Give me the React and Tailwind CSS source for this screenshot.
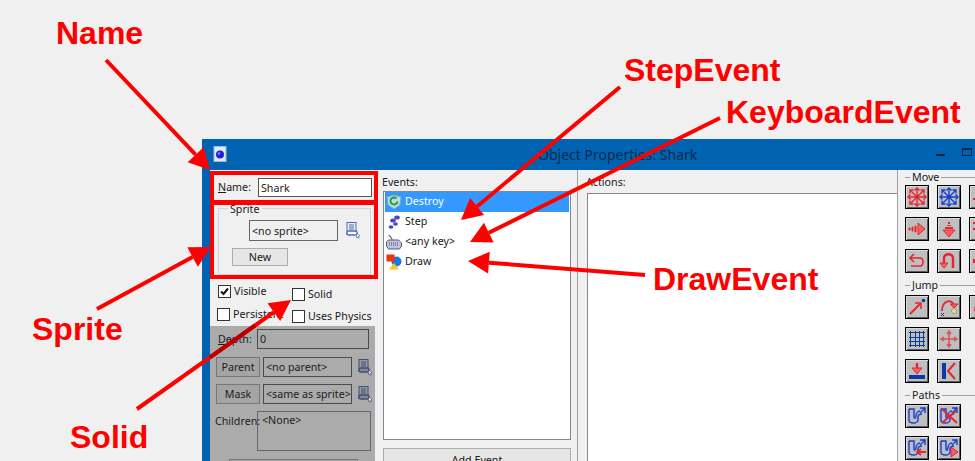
import React from 'react';

const ui = "font-['Noto_Sans',sans-serif] text-[10.7px] leading-[14px]";

// one annotation arrow, tip at (x2, y2)
function Arrow({ x1, y1, x2, y2, size = 21, wide = 11 }) {
  const len = Math.hypot(x2 - x1, y2 - y1);
  const ux = (x2 - x1) / len;
  const uy = (y2 - y1) / len;
  const bx = x2 - ux * size;
  const by = y2 - uy * size;
  const pts = [
    [x2, y2],
    [bx - uy * wide, by + ux * wide],
    [bx + uy * wide, by - ux * wide],
  ]
    .map((p) => p.join(','))
    .join(' ');
  return (
    <g>
      <line x1={x1} y1={y1} x2={bx} y2={by} stroke="#ff0000" strokeWidth="4" />
      <polygon points={pts} fill="#ff0000" />
    </g>
  );
}

function DocIcon({ dim }) {
  const c = dim ? '#3f4f78' : '#4a6fb0';
  return (
    <svg width="15" height="17" viewBox="0 0 15 17" className="shrink-0">
      <rect x="1" y="0.5" width="9" height="12" fill={dim ? '#9a9a9a' : '#e8eef8'} stroke={c} />
      <path d="M3 3h5M3 5h5M3 7h5" stroke={c} />
      <rect x="1" y="9" width="10" height="4" rx="1.5" fill={dim ? '#8a8a8a' : '#fff'} stroke={c} strokeWidth="1.4" />
      <path d="M11 11l3 3-1.5.4.6 1.6-1 .4-.7-1.6-1 .8z" fill="#fff" stroke={c} strokeWidth="0.7" />
    </svg>
  );
}

function Check({ checked }) {
  return (
    <span className="w-[13px] h-[13px] border border-[#333] bg-white shrink-0 flex items-center justify-center">
      {checked && (
        <svg width="11" height="11" viewBox="0 0 11 11">
          <path d="M2 5.5l2.5 2.5L9 2.5" fill="none" stroke="#111" strokeWidth="2" />
        </svg>
      )}
    </span>
  );
}

function Tool({ children }) {
  return (
    <div className="w-[24px] h-[24px] shrink-0 border border-black bg-[#bfbfbf] shadow-[inset_1px_1px_0_#d8d8d8,inset_-1px_-1px_0_#5a5a5a] flex items-center justify-center">
      <svg width="20" height="20" viewBox="0 0 20 20" fill="none">
        {children}
      </svg>
    </div>
  );
}

function Star({ color }) {
  return (
    <g stroke={color} strokeWidth="1.4">
      <path d="M10 1v18M1 10h18M3.5 3.5l13 13M16.5 3.5l-13 13" />
      <path d="M7.5 3.5L10 1l2.5 2.5M7.5 16.5L10 19l2.5-2.5M3.5 7.5L1 10l2.5 2.5M16.5 7.5L19 10l-2.5 2.5M3 6.5V3h3.5M17 6.5V3h-3.5M3 13.5V17h3.5M17 13.5V17h-3.5" />
    </g>
  );
}

const red = '#e8242c';
const blue = '#1040d8';
const navy = '#0a3a9a';

function PathGlyph() {
  return (
    <g>
      <path d="M2 3h5v8c0 2 2 1 2-1 0-3 2-5 4-5" stroke={blue} strokeWidth="1.4" />
      <path d="M2 3v11c0 4 9 4 9 0v-3c0-2 1-3 4-3" stroke={blue} strokeWidth="1.4" />
      <path d="M13 2h5v5M18 2l-5 5" stroke={blue} strokeWidth="1.4" />
    </g>
  );
}

function ToolRow({ children }) {
  return <div className="flex gap-[8px]">{children}</div>;
}

function GroupHead({ label }) {
  return (
    <div className="flex items-center h-[14px]">
      <div className="w-[5px] h-px bg-[#a0a0a0]" />
      <span className="px-[2px]">{label}</span>
      <div className="flex-1 h-px bg-[#a0a0a0]" />
    </div>
  );
}

function EventRow({ icon, label, selected }) {
  return (
    <div className={`h-[20px] flex items-center gap-[3px] pl-px ${selected ? 'bg-[#3399ff] text-white' : ''}`}>
      <svg width="16" height="16" viewBox="0 0 16 16" className="shrink-0">
        {icon}
      </svg>
      <span className="-mt-[2px]">{label}</span>
    </div>
  );
}

function WindowFrame() {
  return (
    <div className={`${ui} ml-[202px] w-[800px] h-[322px] border-l-[8px] border-[#0063b1] bg-[#f0f0f0] text-[#1a1a1a] overflow-hidden`}>
      {/* title bar */}
      <div className="-ml-[8px] h-[31px] bg-[#0063b1] flex items-center relative">
        <svg width="14" height="16" viewBox="0 0 14 16" className="ml-[11px] mb-[1px]">
          <rect x="1" y="0.5" width="12" height="15" fill="#dfe8f7" stroke="#9fb6dd" />
          <circle cx="7" cy="8.5" r="4" fill="#2222cc" />
          <circle cx="6" cy="7.5" r="1.2" fill="#8c8cff" />
        </svg>
        <span className="ml-[311px] text-[14px] text-[#0d2a4c]">Object Properties: Shark</span>
        <div className="ml-[239px] w-[9px] h-[2px] bg-[#10253f] mt-[1px]" />
        <div className="ml-[17px] w-[10px] h-[8px] mb-[5px] border border-[#10253f] border-t-2" />
      </div>

      <div className="flex h-[291px]">
        {/* left column */}
        <div className="w-[165px] shrink-0">
          <div className="flex items-center pl-[8px] pt-[8px] h-[27px]">
            <span className="w-[40px] -mt-[2px]"><u>N</u>ame:</span>
            <div className="w-[114px] h-[19px] border border-[#555] bg-white px-[2px] flex items-center">Shark</div>
          </div>
          <div className="relative mt-[11px] ml-[8px] w-[153px] h-[67px] border border-[#d5d5d5] pt-[11px]">
            <span className="absolute -top-[7px] left-[9px] bg-[#f0f0f0] px-[2px]">Sprite</span>
            <div className="flex items-center">
              <div className="ml-[30px] w-[89px] h-[21px] border border-[#666] flex items-center px-[2px]">&lt;no sprite&gt;</div>
              <div className="ml-[8px]"><DocIcon /></div>
            </div>
            <div className="ml-[13px] mt-[7px] w-[56px] h-[18px] border border-[#adadad] bg-[#e6e6e6] flex items-center justify-center">New</div>
          </div>
          <div className="flex pt-[9px] h-[51px]">
            <div className="pl-[7px] w-[82px] flex flex-col gap-[9px]">
              <label className="flex items-center gap-[3px] pl-[1px]"><Check checked />Visible</label>
              <label className="flex items-center gap-[3px]"><Check />Persistent</label>
            </div>
            <div className="flex flex-col gap-[8px] pt-[3px]">
              <label className="flex items-center gap-[3px]"><Check />Solid</label>
              <label className="flex items-center gap-[3px] whitespace-nowrap"><Check />Uses Physics</label>
            </div>
          </div>
          {/* disabled part */}
          <div className="bg-[#ababab] h-[135px] pt-[3px] text-[#1c1c1c]">
            <div className="flex items-center h-[20px] pl-[8px]">
              <span className="w-[39px]"><u>D</u>epth:</span>
              <div className="w-[112px] h-[20px] border border-[#4a4a4a] px-[2px] flex items-center">0</div>
            </div>
            <div className="flex items-center h-[20px] pl-[6px] mt-[8px]">
              <div className="w-[44px] h-[20px] border border-[#777] bg-[#a4a4a4] flex items-center justify-center">Parent</div>
              <div className="ml-[3px] w-[89px] h-[20px] border border-[#4a4a4a] px-[2px] flex items-center">&lt;no parent&gt;</div>
              <div className="ml-[6px]"><DocIcon dim /></div>
            </div>
            <div className="flex items-center h-[20px] pl-[6px] mt-[7px]">
              <div className="w-[44px] h-[20px] border border-[#777] bg-[#a4a4a4] flex items-center justify-center">Mask</div>
              <div className="ml-[3px] w-[89px] h-[20px] border border-[#4a4a4a] px-[2px] flex items-center whitespace-nowrap">&lt;same as sprite&gt;</div>
              <div className="ml-[6px]"><DocIcon dim /></div>
            </div>
            <div className="flex pl-[5px] mt-[7px]">
              <span className="w-[42px] pt-[3px]">Children:</span>
              <div className="w-[114px] h-[40px] border border-[#666] px-[4px] pt-px">&lt;None&gt;</div>
            </div>
            <div className="ml-[19px] mt-[8px] w-[129px] h-[20px] border border-[#777] bg-[#a4a4a4]" />
          </div>
        </div>

        {/* events column */}
        <div className="w-[203px] shrink-0 pl-[8px] pr-[6px] border-r border-[#a0a0a0]">
          <div className="h-[21px] pt-[5px] -ml-px">Events:</div>
          <div className="h-[249px] border border-[#828790] bg-white px-px">
            <EventRow
              selected
              label="Destroy"
              icon={
                <g>
                  <path d="M1 3l7-2 7 2-1 8-6 4-6-4z" fill="#b8dde8" stroke="#7ba7b8" />
                  <path d="M10.5 4.5a3.5 3.5 0 1 0 1 3" fill="none" stroke="#18a030" strokeWidth="1.8" />
                </g>
              }
            />
            <EventRow
              label="Step"
              icon={
                <g fill="#4848c0">
                  <ellipse cx="11" cy="3.5" rx="2.8" ry="2" />
                  <ellipse cx="7" cy="6.5" rx="2.8" ry="2" />
                  <ellipse cx="9.5" cy="10" rx="2.4" ry="1.8" />
                  <ellipse cx="5" cy="13" rx="2.4" ry="1.8" />
                </g>
              }
            />
            <EventRow
              label="<any key>"
              icon={
                <g>
                  <path d="M0.5 8l2-2h10l3 3v3l-2 3H2.5l-2-3z" fill="#c4c4e0" stroke="#55557a" />
                  <path d="M3 9h9M3 11h9" stroke="#444466" strokeDasharray="1 1" />
                  <path d="M6 6C6 3 4 3 3 1" fill="none" stroke="#777" strokeWidth="1.4" />
                </g>
              }
            />
            <EventRow
              label="Draw"
              icon={
                <g>
                  <circle cx="10.5" cy="7.5" r="5" fill="#1f78e0" />
                  <rect x="0.5" y="0.5" width="8" height="7" fill="#f0320a" />
                  <path d="M8 9l5 6.5H3z" fill="#f8c820" />
                </g>
              }
            />
          </div>
          <div className="mt-[8px] h-[24px] border border-[#adadad] bg-[#e6e6e6] text-center pt-[4px]">Add Event</div>
        </div>

        {/* actions column */}
        <div className="w-[320px] shrink-0 pl-[9px] border-r border-[#a0a0a0]">
          <div className="h-[23px] pt-[5px] -ml-px">Actions:</div>
          <div className="h-[280px] w-[310px] bg-white border-l border-t border-[#828790]" />
        </div>

        {/* action palette */}
        <div className="w-[90px] shrink-0 pl-[7px] flex flex-col">
          <GroupHead label="Move" />
          <div className="flex flex-col gap-[8px] mt-[1px]">
            <ToolRow>
              <Tool><Star color={red} /></Tool>
              <Tool><Star color={blue} /></Tool>
              <Tool><path d="M2 12h8" stroke={red} strokeWidth="2" /></Tool>
            </ToolRow>
            <ToolRow>
              <Tool>
                <path d="M2 9h1v2H2zM5 8h1v4H5zM8 7h1v6H8z" fill={red} stroke={red} />
                <path d="M11 4l7 6-7 6z" fill="#f06068" stroke={red} />
              </Tool>
              <Tool>
                <path d="M9 3h2v2H9zM8 6h4v1H8zM6 8h8v2H6z" fill={red} />
                <path d="M4 11h12l-6 7z" fill="#f06068" stroke={red} />
              </Tool>
              <Tool><path d="M2 4h8M2 10h8" stroke={red} strokeWidth="2" /></Tool>
            </ToolRow>
            <ToolRow>
              <Tool>
                <path d="M7 3L3 7l4 4M3 7h10c4 0 4 8 0 8H4" stroke={red} strokeWidth="1.6" />
              </Tool>
              <Tool>
                <path d="M5 15V7c0-5 9-5 9 0v10" stroke={red} strokeWidth="2.4" />
                <path d="M1 12l4 5 4-5z" fill="#f06068" stroke={red} />
              </Tool>
              <Tool><path d="M2 10h8" stroke={red} strokeWidth="4" /></Tool>
            </ToolRow>
          </div>
          <div className="mt-[5px]"><GroupHead label="Jump" /></div>
          <div className="flex flex-col gap-[8px] mt-[3px]">
            <ToolRow>
              <Tool>
                <path d="M3 17L13 7" stroke={red} strokeWidth="2" />
                <path d="M8 6h6v6" stroke={red} strokeWidth="1.5" />
                <circle cx="16.5" cy="3.5" r="1.8" fill={navy} />
              </Tool>
              <Tool>
                <path d="M3 14C3 4 12 1 15 8" stroke={red} strokeWidth="1.8" />
                <path d="M11 7h8l-4 4z" fill="#f06068" stroke={red} />
                <circle cx="15" cy="14" r="2.5" fill="#f0e070" stroke="#999" />
                <path d="M2 16l3 3M5 16l-3 3" stroke={navy} />
              </Tool>
              <Tool><path d="M4 14C4 8 8 4 10 4" stroke={red} strokeWidth="2" /></Tool>
            </ToolRow>
            <ToolRow>
              <Tool>
                <path d="M3.5 2v16M8.5 2v16M12.5 2v16M16.5 2v16M2 3.5h16M2 8.5h16M2 12.5h16M2 16.5h16" stroke={navy} strokeWidth="1" />
              </Tool>
              <Tool>
                <path d="M10 3v14M3 10h14M8 5l2-3 2 3M8 15l2 3 2-3M5 8l-3 2 3 2M15 8l3 2-3 2" stroke="#e05058" strokeWidth="1.5" />
              </Tool>
            </ToolRow>
            <ToolRow>
              <Tool>
                <path d="M10 2v9" stroke={red} strokeWidth="2.4" />
                <path d="M5 7h10l-5 6z" fill="#f06068" stroke={red} />
                <rect x="2" y="14" width="16" height="4" fill="#0b3aa8" />
              </Tool>
              <Tool>
                <rect x="3" y="2" width="4" height="16" fill="#0b3aa8" />
                <path d="M16 2l-7 8 7 8" stroke={red} strokeWidth="2" />
              </Tool>
            </ToolRow>
          </div>
          <div className="mt-[5px]"><GroupHead label="Paths" /></div>
          <div className="flex flex-col gap-[8px] mt-[2px]">
            <ToolRow>
              <Tool><PathGlyph /></Tool>
              <Tool>
                <PathGlyph />
                <path d="M3 3l15 14M17 5L3 17" stroke={red} strokeWidth="2" />
              </Tool>
            </ToolRow>
            <ToolRow>
              <Tool>
                <PathGlyph />
                <path d="M19 14h-8M14 11l-4 3 4 3" stroke={red} strokeWidth="1.8" />
              </Tool>
              <Tool>
                <PathGlyph />
                <path d="M12 9l7 5-7 5z" fill="#f06068" stroke={red} />
              </Tool>
            </ToolRow>
          </div>
        </div>
      </div>
    </div>
  );
}

const labelCls = "absolute font-['Liberation_Sans',sans-serif] font-bold text-[32px] leading-[36px] text-[#ff0000] whitespace-nowrap";

export default function App() {
  return (
    <div className="relative w-[975px] h-[461px] overflow-hidden bg-[#f0f0f0] pt-[139px]">
      <WindowFrame />

      {/* annotations over the screenshot */}
      <svg width="975" height="461" className="absolute left-0 top-0 pointer-events-none">
        <Arrow x1={106} y1={60} x2={210} y2={170} />
        <Arrow x1={97} y1={309} x2={211} y2={247} />
        <Arrow x1={137} y1={409} x2={291} y2={300} />
        {/* part of the Solid arrow that lies under the dimmed panel */}
        <line x1={210} y1={357.3} x2={255} y2={325.5} stroke="#b80000" strokeWidth="4" />
        <Arrow x1={620} y1={87} x2={461} y2={220} />
        <Arrow x1={720} y1={118} x2={470} y2={242} />
        <Arrow x1={645} y1={275} x2={468} y2={261} />
      </svg>
      <div className="absolute left-[210px] top-[171px] w-[168px] h-[33px] border-[4px] border-[#ff0000]" />
      <div className="absolute left-[210px] top-[201px] w-[168px] h-[78px] border-[4px] border-[#ff0000]" />
      <span className={`${labelCls} left-[56px] top-[15px]`}>Name</span>
      <span className={`${labelCls} left-[32px] top-[311px]`}>Sprite</span>
      <span className={`${labelCls} left-[70px] top-[419px]`}>Solid</span>
      <span className={`${labelCls} left-[624px] top-[52px]`}>StepEvent</span>
      <span className={`${labelCls} left-[726px] top-[94px]`}>KeyboardEvent</span>
      <span className={`${labelCls} left-[653px] top-[261px]`}>DrawEvent</span>
    </div>
  );
}
